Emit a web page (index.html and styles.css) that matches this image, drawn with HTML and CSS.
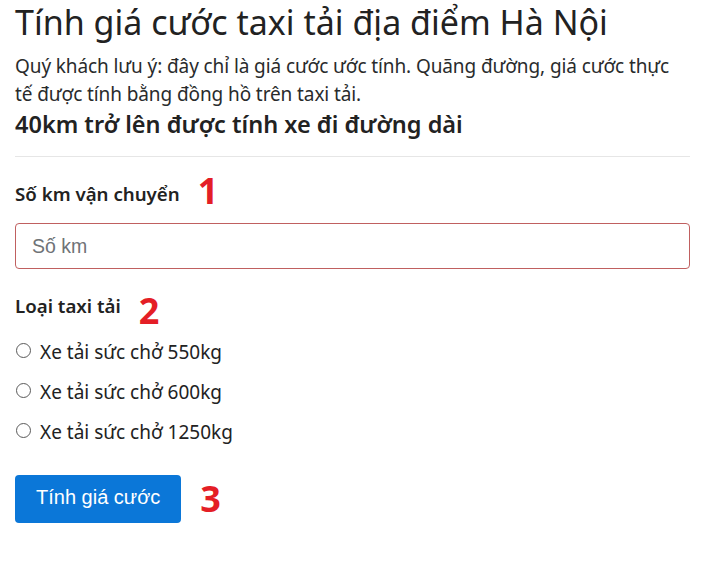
FILE: index.html
```html
<!DOCTYPE html>
<html lang="vi">
<head>
<meta charset="utf-8">
<title>Tính giá cước taxi tải</title>
<link rel="stylesheet" href="styles.css">
</head>
<body>
<main class="page">
  <h1 class="title">Tính giá cước taxi tải địa điểm Hà Nội</h1>
  <p class="note">Quý khách lưu ý: đây chỉ là giá cước ước tính. Quãng đường, giá cước thực tế được tính bằng đồng hồ trên taxi tải.</p>
  <h3 class="subtitle">40km trở lên được tính xe đi đường dài</h3>
  <hr class="divider">
  <form class="form">
    <div class="label-row label-row--first">
      <label class="label" for="km">Số km vận chuyển</label>
      <span class="step">1</span>
    </div>
    <input class="field" id="km" type="text" placeholder="Số km">
    <div class="label-row label-row--second">
      <span class="label">Loại taxi tải</span>
      <span class="step">2</span>
    </div>
    <div class="options">
      <label class="option"><input class="radio" type="radio" name="loai"><span>Xe tải sức chở 550kg</span></label>
      <label class="option"><input class="radio" type="radio" name="loai"><span>Xe tải sức chở 600kg</span></label>
      <label class="option"><input class="radio" type="radio" name="loai"><span>Xe tải sức chở 1250kg</span></label>
    </div>
    <div class="action-row">
      <button class="btn" type="button">Tính giá cước</button>
      <span class="step">3</span>
    </div>
  </form>
</main>
</body>
</html>
```
FILE: styles.css
```css
* { box-sizing: border-box; }
html, body { margin: 0; padding: 0; background: #fff; }
body {
  font-family: "Noto Sans", "Open Sans", sans-serif;
  color: #292b2c;
}
.page {
  width: 705px;
  padding: 2px 15px 0;
}
.title {
  margin: 0;
  font-size: 34px;
  line-height: 40px;
  font-weight: 400;
  color: #222;
}
.note {
  margin: 10px 0 0;
  font-size: 19px;
  line-height: 28px;
  letter-spacing: -0.1px;
}
.subtitle {
  margin: 0;
  font-size: 23.5px;
  line-height: 32px;
  font-weight: 600;
  color: #222;
}
.divider {
  margin: 16px 0 0;
  border: 0;
  border-top: 1px solid #e6e6e6;
  width: 675px;
}
.form { display: flex; flex-direction: column; }
.label-row {
  display: flex;
  align-items: flex-start;
  gap: 18px;
}
.label-row--first { margin-top: 16px; }
.label-row--first .label { margin-top: 8px; }
.label-row--second { margin-top: 24px; }
.label {
  font-size: 18.7px;
  line-height: 26px;
  font-weight: 600;
  color: #222;
}
.step {
  font-size: 36px;
  line-height: 36px;
  font-weight: 700;
  color: #e41e26;
}
.field {
  margin-top: 14px;
  width: 675px;
  height: 46px;
  border: 1px solid #c06060;
  border-radius: 4px;
  padding: 0 16px;
  font-family: "Liberation Sans", Arial, sans-serif;
  font-size: 19.5px;
  color: #495057;
  outline: none;
}
.field::placeholder { color: #6f7377; }
.options {
  display: flex;
  flex-direction: column;
  margin-top: 3px;
}
.option {
  display: flex;
  align-items: flex-start;
  height: 40px;
  font-size: 19px;
  line-height: 40px;
  color: #222;
}
.radio {
  appearance: none;
  -webkit-appearance: none;
  width: 15px;
  height: 15px;
  margin: 11px 9px 0 1px;
  border: 1px solid #5a5a5a;
  border-radius: 50%;
  background: #fff;
  flex: none;
}
.action-row {
  display: flex;
  align-items: center;
  gap: 19px;
  margin-top: 23px;
}
.btn {
  height: 48px;
  padding: 0 21px 3px;
  line-height: 45px;
  border: 0;
  border-radius: 4px;
  background: #0b77d8;
  color: #fff;
  font-family: "Liberation Sans", Arial, sans-serif;
  font-size: 20px;
}
```
